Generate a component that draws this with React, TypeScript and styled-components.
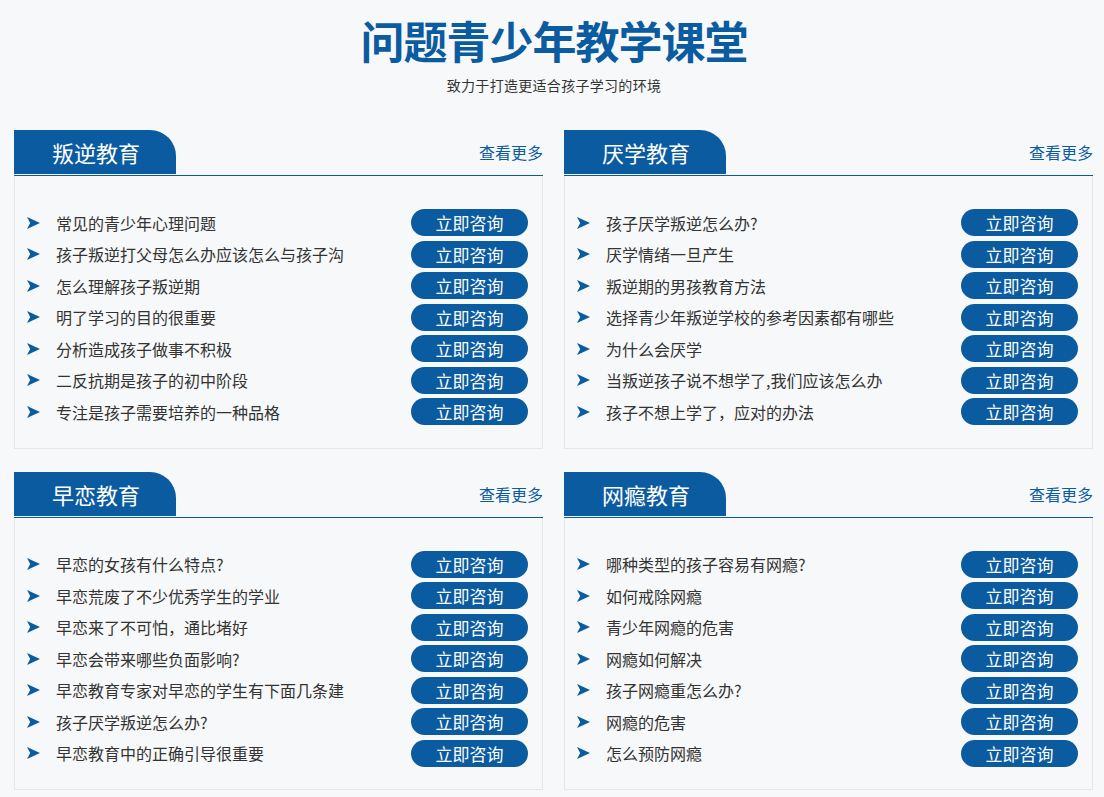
import React from 'react'
import styled, {createGlobalStyle} from 'styled-components'

const BLUE = '#0b5ba1'

const sections = [
  {
    title: '叛逆教育',
    items: [
      '常见的青少年心理问题',
      '孩子叛逆打父母怎么办应该怎么与孩子沟',
      '怎么理解孩子叛逆期',
      '明了学习的目的很重要',
      '分析造成孩子做事不积极',
      '二反抗期是孩子的初中阶段',
      '专注是孩子需要培养的一种品格',
    ],
  },
  {
    title: '厌学教育',
    items: [
      '孩子厌学叛逆怎么办?',
      '厌学情绪一旦产生',
      '叛逆期的男孩教育方法',
      '选择青少年叛逆学校的参考因素都有哪些',
      '为什么会厌学',
      '当叛逆孩子说不想学了,我们应该怎么办',
      '孩子不想上学了，应对的办法',
    ],
  },
  {
    title: '早恋教育',
    items: [
      '早恋的女孩有什么特点?',
      '早恋荒废了不少优秀学生的学业',
      '早恋来了不可怕，通比堵好',
      '早恋会带来哪些负面影响?',
      '早恋教育专家对早恋的学生有下面几条建',
      '孩子厌学叛逆怎么办?',
      '早恋教育中的正确引导很重要',
    ],
  },
  {
    title: '网瘾教育',
    items: [
      '哪种类型的孩子容易有网瘾?',
      '如何戒除网瘾',
      '青少年网瘾的危害',
      '网瘾如何解决',
      '孩子网瘾重怎么办?',
      '网瘾的危害',
      '怎么预防网瘾',
    ],
  },
]

const Arrow = () => (
  <svg width="13" height="12" viewBox="0 0 13 12">
    <path d="M0 0 L13 6 L0 12 L3.2 6 Z" fill={BLUE} />
  </svg>
)

const App = () => {
  return (
    <Page>
      <GlobalStyle />
      <Head>
        <Title>问题青少年教学课堂</Title>
        <Sub>致力于打造更适合孩子学习的环境</Sub>
      </Head>
      <Grid>
        {sections.map((s) => (
          <Section key={s.title}>
            <SectionHead>
              <Tab>{s.title}</Tab>
              <More href="#">查看更多</More>
            </SectionHead>
            <Body>
              {s.items.map((item) => (
                <Row key={item}>
                  <Icn>
                    <Arrow />
                  </Icn>
                  <ItemText>{item}</ItemText>
                  <Button>立即咨询</Button>
                </Row>
              ))}
            </Body>
          </Section>
        ))}
      </Grid>
    </Page>
  )
}

export default App

const GlobalStyle = createGlobalStyle`
body {
  margin: 0;
  background: #f7f8f9;
  font-family: "Noto Sans CJK SC", "Noto Sans", sans-serif;
}
`

const Page = styled.div`
width: 1104px;
padding: 14px 10px 0 14px;
box-sizing: border-box;
`

const Head = styled.div`
display: flex;
flex-direction: column;
align-items: center;
`

const Title = styled.h1`
margin: 0;
font-size: 44px;
line-height: 52px;
font-weight: 700;
color: ${BLUE};
letter-spacing: -1px;
`

const Sub = styled.div`
margin-top: 9px;
font-size: 14px;
line-height: 20px;
color: #333;
letter-spacing: 0.3px;
`

const Grid = styled.div`
margin-top: 35px;
display: grid;
grid-template-columns: 529px 529px;
column-gap: 21px;
row-gap: 23px;
`

const Section = styled.div``

const SectionHead = styled.div`
display: flex;
justify-content: space-between;
align-items: flex-end;
border-bottom: 1px solid ${BLUE};
padding-bottom: 1px;
`

const Tab = styled.div`
width: 162px;
height: 44px;
box-sizing: border-box;
padding-left: 38px;
background: ${BLUE};
border-top-right-radius: 26px;
color: #fff;
font-size: 22px;
line-height: 44px;
`

const More = styled.a`
margin-bottom: 11px;
font-size: 16px;
line-height: 22px;
color: ${BLUE};
text-decoration: none;
`

const Body = styled.div`
border: 1px solid #e6e7e8;
border-top: none;
padding: 31px 14px 20px 12px;
`

const Row = styled.div`
display: flex;
align-items: center;
height: 31.5px;
`

const Icn = styled.div`
display: flex;
width: 29px;
`

const ItemText = styled.div`
flex: 1;
font-size: 16px;
color: #333;
white-space: nowrap;
overflow: hidden;
`

const Button = styled.button`
width: 117px;
height: 27px;
border: none;
border-radius: 14px;
background: ${BLUE};
color: #fff;
font-family: inherit;
font-size: 17px;
line-height: 27px;
padding: 0;
cursor: pointer;
`
